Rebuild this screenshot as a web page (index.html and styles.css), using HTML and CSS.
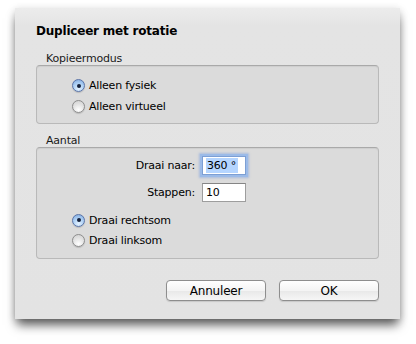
FILE: index.html
```html
<!DOCTYPE html>
<html>
<head>
    <title>Dupliceer met rotatie</title>
    <link rel="stylesheet" href="styles.css">
</head>
<body>
    <div class="sheet">
        <h1 class="title">Dupliceer met rotatie</h1>

        <div class="group-label">Kopieermodus</div>
        <div class="group group-mode">
            <div class="radio-row"><span class="radio checked"></span>Alleen fysiek</div>
            <div class="radio-row"><span class="radio"></span>Alleen virtueel</div>
        </div>

        <div class="group-label group-label-count">Aantal</div>
        <div class="group group-count">
            <div class="field-row">
                <label class="field-label">Draai naar:</label>
                <div class="field focused"><span class="selection">360 °</span></div>
            </div>
            <div class="field-row">
                <label class="field-label">Stappen:</label>
                <div class="field">10</div>
            </div>
            <div class="radios">
                <div class="radio-row radio-row-tight"><span class="radio checked"></span>Draai rechtsom</div>
                <div class="radio-row radio-row-tight"><span class="radio"></span>Draai linksom</div>
            </div>
        </div>

        <div class="buttons">
            <button class="button">Annuleer</button>
            <button class="button">OK</button>
        </div>
    </div>
</body>
</html>
```

FILE: styles.css
```css
html {
    min-height: 100%;
    background-color: white;
}

body {
    margin: 0;
    min-height: 344px;
    padding: 8px 0 0 15px;
    box-sizing: border-box;
    font-family: "DejaVu Sans", "Liberation Sans", sans-serif;
    font-size: 11px;
    letter-spacing: -0.2px;
    color: black;
}

.sheet {
    width: 385px;
    height: 311px;
    box-sizing: border-box;
    padding: 15px 21px 0 21px;
    background: linear-gradient(#ececec, #e4e4e4 18px, #e3e3e3);
    box-shadow: 0 8px 10px -2px rgba(0, 0, 0, 0.6), 0 2px 8px rgba(0, 0, 0, 0.18);
}

.title {
    margin: 0 0 13px 0;
    font-size: 12px;
    line-height: 16px;
    font-weight: bold;
}

.group-label {
    margin-left: 10px;
    line-height: 13px;
    color: #1a1a1a;
}

.group-label-count {
    margin-top: 10px;
}

.group {
    border: 1px solid #b9b9b9;
    border-top-color: #a9a9a9;
    border-radius: 4px;
    background-color: #dbdbdb;
    box-shadow: inset 0 1px 1px rgba(0, 0, 0, 0.06);
}

.group-mode {
    padding: 9px 0 6px 35px;
}

.group-count {
    padding: 8px 0 8px 35px;
}

.radio-row {
    display: flex;
    align-items: center;
    height: 21px;
    gap: 4px;
}

.radio-row-tight {
    height: 20px;
}

.radio {
    width: 13px;
    height: 13px;
    box-sizing: border-box;
    border-radius: 50%;
    border: 1px solid #8d8d8d;
    background: radial-gradient(circle at 50% 80%, #ffffff, #e2e2e2 55%, #cfcfcf);
    box-shadow: 0 1px 1px rgba(0, 0, 0, 0.15);
    display: flex;
    align-items: center;
    justify-content: center;
}

.radio.checked {
    border-color: #5a74a8;
    background: radial-gradient(circle at 50% 80%, #e4f2ff, #a9cdf3 55%, #7ea7dc);
}

.radio.checked::after {
    content: "";
    width: 4px;
    height: 4px;
    border-radius: 50%;
    background-color: #15213a;
}

.field-row {
    display: flex;
    align-items: center;
    gap: 7px;
    margin-left: -35px;
    margin-bottom: 8px;
}

.field-label {
    width: 158px;
    text-align: right;
}

.field {
    width: 44px;
    height: 19px;
    box-sizing: border-box;
    border: 1px solid #9d9d9d;
    border-top-color: #858585;
    background-color: white;
    padding: 0 0 0 3px;
    line-height: 17px;
    font-size: 11px;
}

.field.focused {
    border-color: #7d9fd4;
    box-shadow: 0 0 0 2px #9cbbe8, 0 0 2px 3px rgba(120, 160, 225, 0.5);
}

.selection {
    background-color: #b5d5ff;
    padding: 1px 2px 1px 1px;
}

.buttons {
    display: flex;
    justify-content: flex-end;
    gap: 13px;
    margin-top: 21px;
}

.button {
    width: 100px;
    height: 21px;
    padding: 0;
    border: 1px solid #8e8e8e;
    border-radius: 4px;
    background: linear-gradient(#ffffff, #f4f4f4 50%, #e8e8e8 51%, #f6f6f6);
    box-shadow: 0 1px 1px rgba(0, 0, 0, 0.12);
    font-family: "DejaVu Sans", "Liberation Sans", sans-serif;
    font-size: 12px;
    letter-spacing: -0.2px;
    color: black;
}
```
